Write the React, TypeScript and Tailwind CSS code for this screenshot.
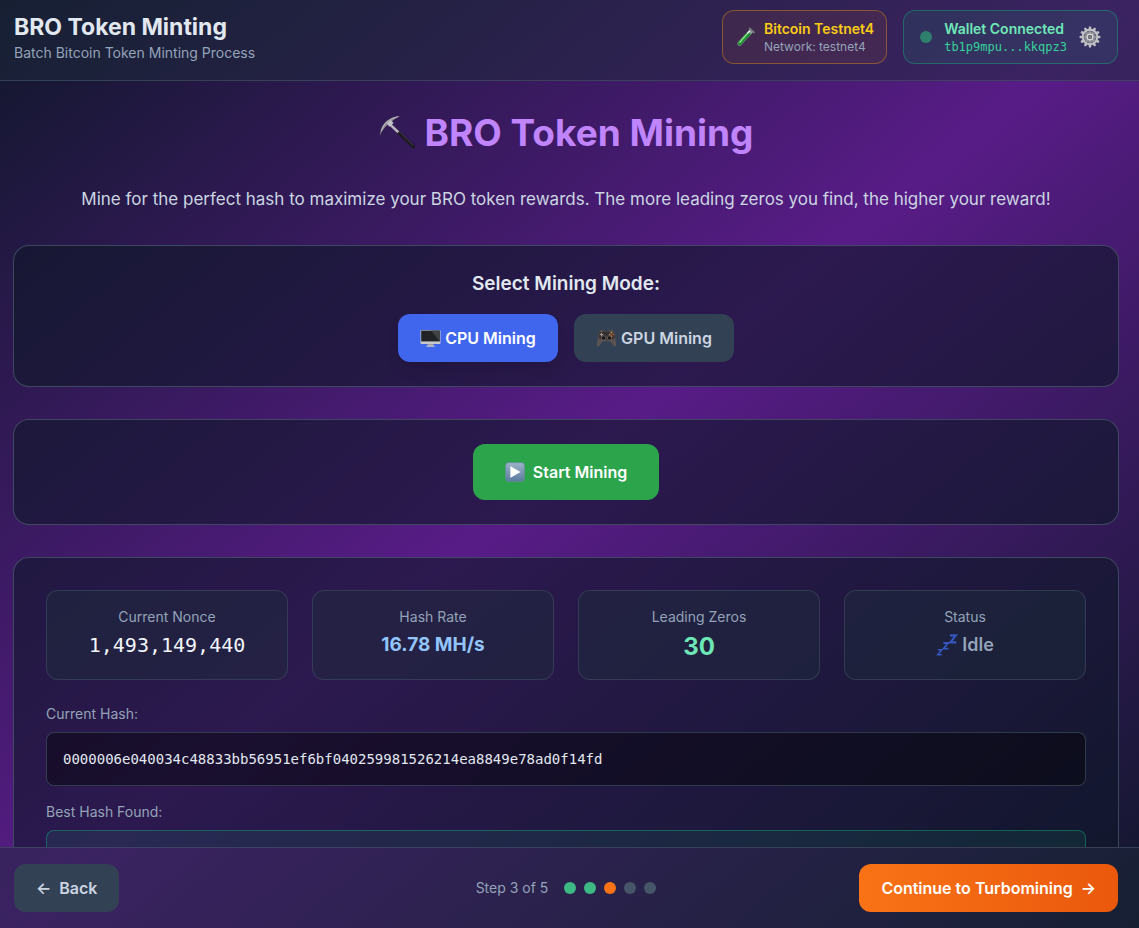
import { useState, type ReactNode } from "react";
import clsx from "clsx";

const CURRENT_HASH = "0000006e040034c48833bb56951ef6bf040259981526214ea8849e78ad0f14fd";
const STEPS = [1, 2, 3, 4, 5];
const CURRENT_STEP = 3;

const MONO = "font-['DejaVu_Sans_Mono','Liberation_Mono',monospace]";

function TestTubeIcon() {
  return (
    <svg viewBox="0 0 22 22" className="h-[22px] w-[21px] shrink-0" aria-hidden>
      <path d="M15.6 2.9 3 16.6a2.2 2.2 0 0 0 3.2 3L18.9 6z" fill="#8fa09c" />
      <path d="M13 5.8 3.3 16.8a1.9 1.9 0 0 0 2.7 2.6L17 7.8z" fill="#238a34" />
      <path d="M12.2 8.2 5 16.6" stroke="#8df08a" strokeWidth="1.3" strokeLinecap="round" />
      <path d="M15.4 4.6 13 7.2" stroke="#f4f7f6" strokeWidth="1.4" strokeLinecap="round" />
      <path d="m15.3 2 4.6 4.2" stroke="#77797f" strokeWidth="2" strokeLinecap="round" />
    </svg>
  );
}

function GearIcon() {
  const teeth = Array.from({ length: 12 }, (_, i) => i * 30);
  return (
    <svg viewBox="0 0 22 22" className="size-[22px]" aria-hidden>
      {teeth.map((deg) => (
        <path key={deg} d="M9.4 3.5 10 .6h2l.6 2.9z" fill="#bfc0c4" transform={`rotate(${deg} 11 11)`} />
      ))}
      <circle cx="11" cy="11" r="7.2" fill="none" stroke="#c2c3c7" strokeWidth="2" />
      <circle cx="11" cy="11" r="6" fill="#85868c" />
      <path d="M11 5.4v11.2M5.4 11h11.2M7 7l8 8M15 7l-8 8" stroke="#a3a4aa" strokeWidth="1.2" />
      <circle cx="11" cy="11" r="2.8" fill="#64656c" stroke="#dcdde0" strokeWidth="1.2" />
      <circle cx="11" cy="11" r=".8" fill="#b4b5ba" />
    </svg>
  );
}

function PickaxeIcon() {
  return (
    <svg viewBox="0 0 38 38" className="size-[38px] shrink-0" aria-hidden>
      <path d="m18.5 17.5 16 15.2" stroke="#1d1b22" strokeWidth="3.6" strokeLinecap="round" />
      <path d="m19.5 17 14.5 14" stroke="#3d3b43" strokeWidth="1" />
      <path d="m11 10.4 8.3 7.8" stroke="#b9b5c0" strokeWidth="2.6" />
      <path d="M.8 21.8C1.6 14.6 4 9.6 8.2 6.6 12 3.6 16.5 2.2 21.4 2c-4 2.1-7.4 4-9.8 6.4C7.2 11.5 3.3 15.4.8 21.8z" fill="#8d8993" />
      <path d="M2.2 17C4 11.3 8 7 13 4.6l6-2" fill="none" stroke="#c8c5cc" strokeWidth=".8" />
      <path d="m7.6 9.4 4-3.4 3 3-4 3.8z" fill="#c4c0c8" />
    </svg>
  );
}

function MonitorIcon() {
  return (
    <svg viewBox="0 0 21 20" className="h-5 w-[21px] shrink-0" aria-hidden>
      <path d="M8 14h5l.6 4H7.4z" fill="#9da1a5" />
      <path d="M6.5 17.6h8v1.2h-8z" fill="#c9ccd0" />
      <rect x=".5" y="2" width="20" height="14" rx="1" fill="#c5c8cc" />
      <rect x="1.2" y="2.6" width="18.6" height="10.8" fill="#202225" />
      <path d="M11 2.6h8.8v10.8z" fill="#3f4346" />
    </svg>
  );
}

function GamepadIcon() {
  return (
    <svg viewBox="0 0 21 20" className="h-5 w-[21px] shrink-0" aria-hidden>
      <path
        d="M4.5 2.2h3l1 1h4l1-1h3l2 2.6 1.7 12.4c-.4 1.6-2 1.6-2.9.2l-3-4.200H6.700l-3 4.200c-.9 1.400-2.500 1.400-2.900-.2L2.500 4.800z"
        fill="#5a5352"
      />
      <path d="M3 4.500C5 3 16 3 18 4.500l.5 5.500c-4 3-11 3-16 0z" fill="#36302f" />
      <circle cx="7.6" cy="10" r="2.3" fill="#1c191b" stroke="#746a66" strokeWidth=".8" />
      <circle cx="13.4" cy="10" r="2.3" fill="#1c191b" stroke="#746a66" strokeWidth=".8" />
      <path d="M5.5 4.8v3.400M3.800 6.500h3.400" stroke="#a19893" strokeWidth="1" />
      <circle cx="15.5" cy="4.6" r=".9" fill="#c9a143" />
      <circle cx="17.2" cy="6.3" r=".9" fill="#b35b3b" />
      <circle cx="13.8" cy="6.3" r=".9" fill="#a98467" />
      <circle cx="15.5" cy="8" r=".9" fill="#c2763b" />
    </svg>
  );
}

function PlayIcon() {
  return (
    <svg viewBox="0 0 20 20" className="size-5 shrink-0" aria-hidden>
      <defs>
        <linearGradient id="play-face" x1="0" y1="0" x2="0" y2="1">
          <stop offset="0" stopColor="#9db4ca" />
          <stop offset="1" stopColor="#5c7b9e" />
        </linearGradient>
      </defs>
      <rect x=".7" y=".7" width="18.6" height="18.6" rx="2.6" fill="url(#play-face)" stroke="#6f8ba6" strokeWidth=".8" />
      <path d="M5.4 4.2 15.6 10 5.4 15.8z" fill="#fff" />
    </svg>
  );
}

function SleepIcon() {
  return (
    <svg viewBox="0 0 22 24" className="h-6 w-[22px] shrink-0" fill="none" stroke="#3456c0" aria-hidden>
      <path d="M1.8 16.800h4l-4 5h4" strokeWidth="1.6" />
      <path d="M7.4 10h4.600l-4.400 5.600h4.800" strokeWidth="1.8" />
      <path d="M14 2.400h5.800l-5.400 7h5.800" strokeWidth="2.2" />
    </svg>
  );
}

function Panel({ className, children }: { className?: string; children: ReactNode }) {
  return (
    <section className={clsx("rounded-2xl border border-[#475569]/80 bg-[#0f172a]/60", className)}>
      {children}
    </section>
  );
}

function StatCard({ label, children }: { label: string; children: ReactNode }) {
  return (
    <div className="rounded-xl border border-[#475569]/50 bg-[#1e293b]/50 p-4 text-center">
      <p className="mb-1 text-sm text-[#94a3b8]">{label}</p>
      {children}
    </div>
  );
}

function HashField({ label, hash, best }: { label: string; hash?: string; best?: boolean }) {
  return (
    <div>
      <p className="mb-2 text-sm text-[#94a3b8]">{label}</p>
      <div
        className={clsx(
          "min-h-[54px] rounded-lg border p-4 text-sm break-all",
          best ? "border-[#10b981]/40 bg-[#10b981]/10 text-[#6ee7b7]" : "border-[#475569]/60 bg-black/40 text-[#e2e8f0]",
          MONO,
        )}
      >
        {hash}
      </div>
    </div>
  );
}

function Header() {
  return (
    <header className="flex items-center justify-between border-b border-[#475569]/60 bg-[#1e293b]/50 pt-[10px] pr-[21px] pb-4 pl-[14px]">
      <div>
        <h1 className="text-[23px] leading-8 font-bold text-[#e2e8f0]">BRO Token Minting</h1>
        <p className="text-sm text-[#94a3b8]">Batch Bitcoin Token Minting Process</p>
      </div>
      <div className="flex items-center gap-4">
        <div className="flex items-center gap-2 rounded-xl border border-[#f59e0b]/40 bg-[#f97316]/8 px-3 py-2">
          <TestTubeIcon />
          <div>
            <p className="text-sm font-semibold text-[#facc15]">Bitcoin Testnet4</p>
            <p className="text-xs text-[#94a3b8]">Network: testnet4</p>
          </div>
        </div>
        <div className="flex items-center gap-3 rounded-xl border border-[#10b981]/40 bg-[#10b981]/10 px-4 py-2">
          <span className="size-3 rounded-full bg-[#2f7f6e]" />
          <div>
            <p className="text-sm font-semibold text-[#6ee7b7]">Wallet Connected</p>
            <p className={clsx("text-xs text-[#34d399]", MONO)}>tb1p9mpu...kkqpz3</p>
          </div>
          <button type="button" aria-label="Wallet settings">
            <GearIcon />
          </button>
        </div>
      </div>
    </header>
  );
}

function Footer() {
  return (
    <footer className="flex items-center justify-between border-t border-[#475569]/60 bg-[#1e293b]/50 py-4 pr-[21px] pl-[14px]">
      <div className="flex flex-1">
        <button type="button" className="flex h-12 items-center gap-2 rounded-xl bg-[#334155] px-[22px] font-semibold text-[#cbd5e1]">
          <span>←</span>
          <span>Back</span>
        </button>
      </div>
      <div className="flex items-center gap-4">
        <span className="text-sm text-[#94a3b8]">Step {CURRENT_STEP} of {STEPS.length}</span>
        <div className="flex gap-2">
          {STEPS.map((step) => (
            <span
              key={step}
              className={clsx(
                "size-3 rounded-full",
                step < CURRENT_STEP && "bg-[#3dba84]",
                step === CURRENT_STEP && "bg-[#f97316]",
                step > CURRENT_STEP && "bg-[#475569]",
              )}
            />
          ))}
        </div>
      </div>
      <div className="flex flex-1 justify-end">
        <button
          type="button"
          className="flex h-12 items-center gap-2 rounded-xl bg-linear-to-r from-[#f97316] to-[#ea580c] px-[22px] font-semibold text-white"
        >
          <span>Continue to Turbomining</span>
          <span>→</span>
        </button>
      </div>
    </footer>
  );
}

export default function App() {
  const [mode, setMode] = useState<"cpu" | "gpu">("cpu");

  const modeButton = (active: boolean) =>
    clsx(
      "flex h-12 w-40 items-center justify-center gap-1 rounded-xl font-semibold",
      active ? "bg-[#3f66ec] text-white shadow-lg" : "bg-[#334155] text-[#cbd5e1]",
    );

  return (
    <div className="flex h-screen flex-col bg-linear-to-br/srgb from-[#0f172a] via-[#581c87] to-[#0f172a] font-[Inter,'Liberation_Sans',sans-serif]">
      <Header />

      <main className="min-h-0 flex-1 overflow-y-auto pt-8 pr-5 pb-8 pl-[13px] [scrollbar-width:none]">
        <h2 className="flex items-center justify-center gap-2 text-[37px] leading-10 font-bold text-[#c084fc]">
          <PickaxeIcon />
          BRO Token Mining
        </h2>
        <p className="mt-8 text-center text-[17px] leading-7 text-[#cbd5e1]">
          Mine for the perfect hash to maximize your BRO token rewards. The more leading zeros you find, the higher your reward!
        </p>

        <div className="mt-8 flex flex-col gap-8">
          <Panel className="p-6">
            <h3 className="mb-4 text-center text-[19px] leading-7 font-semibold text-[#e2e8f0]">Select Mining Mode:</h3>
            <div className="flex justify-center gap-4">
              <button type="button" className={modeButton(mode === "cpu")} onClick={() => setMode("cpu")}>
                <MonitorIcon />
                CPU Mining
              </button>
              <button type="button" className={modeButton(mode === "gpu")} onClick={() => setMode("gpu")}>
                <GamepadIcon />
                GPU Mining
              </button>
            </div>
          </Panel>

          <Panel className="flex justify-center p-6">
            <button type="button" className="flex h-14 items-center gap-2 rounded-xl bg-[#2ca44c] px-8 font-semibold text-white">
              <PlayIcon />
              Start Mining
            </button>
          </Panel>

          <Panel className="p-8">
            <div className="mb-6 grid grid-cols-4 gap-6">
              <StatCard label="Current Nonce">
                <p className={clsx("text-xl text-[#f1f5f9]", MONO)}>1,493,149,440</p>
              </StatCard>
              <StatCard label="Hash Rate">
                <p className="text-[19px] leading-7 font-bold text-[#93c5fd]">16.78 MH/s</p>
              </StatCard>
              <StatCard label="Leading Zeros">
                <p className="text-2xl font-bold text-[#6ee7b7]">30</p>
              </StatCard>
              <StatCard label="Status">
                <p className="flex items-center justify-center gap-1 text-lg font-semibold text-[#94a3b8]">
                  <SleepIcon />
                  Idle
                </p>
              </StatCard>
            </div>

            <div className="flex flex-col gap-4">
              <HashField label="Current Hash:" hash={CURRENT_HASH} />
              <HashField label="Best Hash Found:" best />
            </div>
          </Panel>
        </div>
      </main>

      <Footer />
    </div>
  );
}
